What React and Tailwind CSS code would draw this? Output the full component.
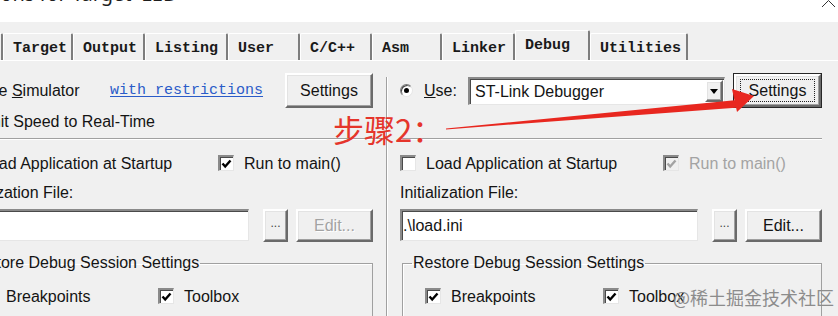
import React from "react";

const ui = "font-['Liberation_Sans',Arial,sans-serif]";
const mono = "font-['Liberation_Mono','Courier_New',monospace]";
const cjk = "font-['Noto_Sans_CJK_SC','Noto_Sans',sans-serif]";

// classic win32 bevels
const raised =
  "bg-[#f0f0f0] border-t-2 border-l-2 border-t-white border-l-white border-b-2 border-r-2 border-b-[#6a6a6a] border-r-[#6a6a6a] shadow-[inset_-1px_-1px_0_#a0a0a0,inset_1px_1px_0_#e3e3e3]";
const sunken =
  "border-t-2 border-l-2 border-t-[#8a8a8a] border-l-[#8a8a8a] border-b border-r border-b-[#e6e6e6] border-r-[#e6e6e6] shadow-[inset_1px_1px_0_#4a4a4a]";

const tabs = [
  { label: "Device", w: "w-[70px] ml-[-67px]" },
  { label: "Target", w: "w-[70px]" },
  { label: "Output", w: "w-[72px]" },
  { label: "Listing", w: "w-[83px]" },
  { label: "User", w: "w-[72px]" },
  { label: "C/C++", w: "w-[72px]" },
  { label: "Asm", w: "w-[70px]" },
  { label: "Linker", w: "w-[73px]" },
  { label: "Debug", w: "w-[75px]", active: true },
  { label: "Utilities", w: "w-[98px]" },
];

function Check({ checked, disabled }) {
  return (
    <span
      className={`w-[16px] h-[16px] shrink-0 flex items-center justify-center ${sunken} ${
        disabled ? "bg-[#f0f0f0]" : "bg-white"
      }`}
    >
      {checked && (
        <svg width="11" height="10" viewBox="0 0 11 10">
          <polyline
            points="1.5,4.5 4.2,7.5 9.5,1.5"
            fill="none"
            stroke={disabled ? "#a3a3a3" : "#000"}
            strokeWidth="2.4"
          />
        </svg>
      )}
    </span>
  );
}

function Radio({ on }) {
  return (
    <span className="w-[13px] h-[13px] shrink-0 rounded-full bg-white border border-t-[#7a7a7a] border-l-[#7a7a7a] border-b-[#e6e6e6] border-r-[#e6e6e6] shadow-[inset_1px_1px_0_#4a4a4a] flex items-center justify-center">
      {on && <span className="w-[5px] h-[5px] rounded-full bg-black" />}
    </span>
  );
}

function CheckLabel({ checked, disabled, children, className = "" }) {
  return (
    <span className={`flex items-center ${className}`}>
      <Check checked={checked} disabled={disabled} />
      <span
        className={`ml-[10px] pt-[2px] whitespace-nowrap ${
          disabled ? "text-[#a3a3a3]" : ""
        }`}
      >
        {children}
      </span>
    </span>
  );
}

function Panel({ sim }) {
  return (
    <div
      className={`${sim ? "ml-[-45px] w-[418px]" : "ml-[12px] w-[422px]"} pt-[12px] flex flex-col`}
    >
      {/* row 1 */}
      <div className="h-[35px] flex items-center">
        {sim ? (
          <>
            <span className="w-[155px] flex items-center shrink-0">
              <Radio />
              <span className="ml-[11px] whitespace-nowrap">
                Use <u>S</u>imulator
              </span>
            </span>
            <span
              className={`${mono} text-[15px] text-[#2a5bc8] underline underline-offset-2 whitespace-nowrap`}
            >
              with restrictions
            </span>
            <span
              className={`ml-auto w-[88px] h-[35px] flex items-center justify-center ${raised}`}
            >
              Settings
            </span>
          </>
        ) : (
          <>
            <span className="w-[68px] flex items-center shrink-0">
              <Radio on />
              <span className="ml-[11px]">
                <u>U</u>se:
              </span>
            </span>
            <div
              className={`w-[257px] h-[28px] bg-white flex items-center ${sunken}`}
            >
              <span className="flex-1 pl-[5px] pt-[1px] whitespace-nowrap">
                ST-Link Debugger
              </span>
              <span
                className={`w-[18px] h-[22px] mr-[1px] flex items-center justify-center ${raised}`}
              >
                <svg width="8" height="5" viewBox="0 0 8 5">
                  <polygon points="0,0 8,0 4,5" fill="#000" />
                </svg>
              </span>
            </div>
            <span className="ml-auto w-[89px] h-[35px] border border-[#262626] flex">
              <span
                className={`relative flex-1 flex items-center justify-center ${raised}`}
              >
                <span className="absolute left-[4px] right-[4px] top-[3px] bottom-[3px] border border-dotted border-[#222]" />
                Settings
              </span>
            </span>
          </>
        )}
      </div>

      {/* row 2 */}
      <div className="h-[22px] mt-[3px] flex items-center">
        {sim && (
          <span className="flex items-center">
            <Check checked />
            <span className="ml-[4px] whitespace-nowrap">
              Limit Speed to Real-Time
            </span>
          </span>
        )}
      </div>

      <div
        className={`h-[2px] mt-[5px] border-t border-t-[#a0a0a0] border-b border-b-white ${
          sim ? "mr-[-11px]" : ""
        }`}
      />

      {/* row 3 */}
      <div className="h-[22px] mt-[12px] flex items-center">
        <CheckLabel checked={sim} className="w-[263px] shrink-0">
          Load Application at Startup
        </CheckLabel>
        <CheckLabel checked disabled={!sim}>
          Run to main()
        </CheckLabel>
      </div>

      {/* row 4 */}
      <div className="h-[22px] mt-[7px] pt-[2px] flex items-center">Initialization File:</div>

      {/* row 5 */}
      <div className="h-[33px] mt-[6px] flex items-start">
        <div className={`flex-1 h-[32px] bg-white flex items-center ${sunken}`}>
          <span className="pl-[1px] whitespace-nowrap">{sim ? "" : ".\\load.ini"}</span>
        </div>
        <span
          className={`ml-[14px] w-[25px] h-[33px] flex items-end justify-center pb-[7px] text-[12px] text-[#444] ${raised}`}
        >
          ...
        </span>
        <span
          className={`ml-[8px] w-[77px] h-[33px] flex items-center justify-center ${raised} ${
            sim ? "text-[#a3a3a3] [text-shadow:1px_1px_0_#fff]" : ""
          }`}
        >
          Edit...
        </span>
      </div>

      {/* group */}
      <fieldset className="mt-[11px] ml-[2px] border border-[#a0a0a0] shadow-[inset_1px_1px_0_#fff] min-w-0">
        <legend className="ml-[9px] px-[1px] leading-[20px] whitespace-nowrap">
          Restore Debug Session Settings
        </legend>
        <div className="pl-[22px] mt-[12px] h-[22px] flex items-center">
          <CheckLabel checked className="w-[178px] shrink-0">
            Breakpoints
          </CheckLabel>
          <CheckLabel checked>Toolbox</CheckLabel>
        </div>
        <div className="pl-[22px] mt-[7px] h-[22px] flex items-center">
          <CheckLabel checked className="w-[178px] shrink-0">
            Watch Windows
          </CheckLabel>
          <CheckLabel checked>Memory Display</CheckLabel>
        </div>
      </fieldset>
    </div>
  );
}

export default function App() {
  return (
    <div
      className={`relative w-[838px] h-[316px] overflow-hidden bg-[#f0f0f0] flex flex-col text-[16px] leading-[20px] text-[#141414] ${ui}`}
    >
      {/* title bar */}
      <div className="h-[22px] shrink-0 bg-white flex justify-between overflow-hidden">
        <div className="ml-[-40px] mt-[-16px] text-[20px] leading-[20px] font-['Noto_Sans',sans-serif] text-[#1e1e1e] whitespace-nowrap">
          Options for Target 'LED'
        </div>
        <svg width="16" height="8" viewBox="0 0 16 8" className="mr-[1px] shrink-0">
          <polyline points="1,7 7.5,0.5 14,7" fill="none" stroke="#333" strokeWidth="1" />
        </svg>
      </div>

      {/* tab strip */}
      <div className="h-[38px] shrink-0 flex items-end overflow-hidden">
        {tabs.map((t) => (
          <div
            key={t.label}
            className={`${t.w} shrink-0 flex items-center pl-[9px] border-l border-t border-l-white border-t-white border-r-2 border-r-[#7d7d7d] rounded-t-[2px] ${mono} text-[15px] font-bold text-[#1a1a1a] whitespace-nowrap ${
              t.active ? "h-[30px] pt-[1px]" : "h-[27px] pt-[3px]"
            }`}
          >
            {t.label}
          </div>
        ))}
      </div>

      {/* page */}
      <div className="flex flex-1 border-t border-t-white">
        <div className="w-[386px] shrink-0 overflow-hidden">
          <Panel sim />
        </div>
        <div className="w-[2px] shrink-0 mt-[16px] border-l border-l-[#a0a0a0] border-r border-r-white" />
        <div className="flex-1 overflow-hidden">
          <Panel />
        </div>
      </div>

      {/* red annotation */}
      <div
        className={`absolute left-[333px] top-[113px] text-[31px] leading-[32px] text-[#e5352b] whitespace-nowrap ${cjk}`}
      >
        步骤2：
      </div>
      <svg
        className="absolute left-0 top-0 pointer-events-none"
        width="838"
        height="316"
        viewBox="0 0 838 316"
      >
        <polygon points="446,128.6 737,100 739,107.5 446,129.4" fill="#e8271f" />
        <polygon points="732,89 754,96 737,112" fill="#e8271f" />
      </svg>

      {/* watermark */}
      <div
        className={`absolute left-[673px] top-[287px] text-[18px] leading-[20px] text-[#8c8c8c] whitespace-nowrap ${cjk}`}
      >
        @稀土掘金技术社区
      </div>
    </div>
  );
}
